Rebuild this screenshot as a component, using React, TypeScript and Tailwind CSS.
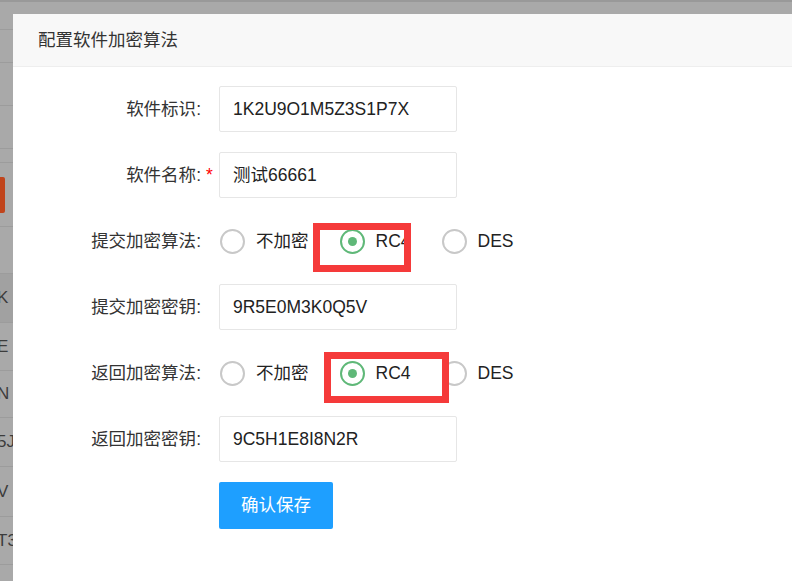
import type { ReactNode } from 'react';

const font = { fontFamily: '"Liberation Sans", "Noto Sans CJK SC", sans-serif' };

// rows of the table behind the modal shade; only a thin slice shows at the left
const bgRows: { h: number; text?: string; dark?: boolean; button?: boolean }[] = [
  { h: 30 }, { h: 33 }, { h: 43 }, { h: 43 }, { h: 14 },
  { h: 64, button: true }, { h: 47 },
  { h: 49, text: 'K', dark: true },
  { h: 48, text: 'E' }, { h: 47, text: 'N' }, { h: 49, text: '5J' },
  { h: 50, text: 'V' }, { h: 48, text: 'T3' }, { h: 30 },
];

function Radio({ label, checked }: { label: string; checked?: boolean }) {
  return (
    <div className="flex items-center mr-[31px]">
      <span className={`w-[25px] h-[25px] rounded-full border-2 flex items-center justify-center ${checked ? 'border-[#5fb878]' : 'border-[#c8c8c8]'}`}>
        {checked && <span className="w-[9px] h-[9px] rounded-full bg-[#5fb878]" />}
      </span>
      <span className="ml-[11px] text-[#222]">{label}</span>
    </div>
  );
}

function Row({ label, required, children }: { label: string; required?: boolean; children: ReactNode }) {
  return (
    <div className="flex items-center h-[46px]">
      <div className="w-[188px] text-right text-[#333] relative">
        {label}:
        {required && <span className="absolute left-full ml-[5px] top-0 text-[#f00]">*</span>}
      </div>
      <div className="ml-[18px] flex items-center h-full relative">{children}</div>
    </div>
  );
}

function Field({ value }: { value: string }) {
  return (
    <div className="w-[238px] h-[46px] border border-[#e6e6e6] rounded-[2px] bg-white flex items-center pl-[13px] text-[#222]">
      {value}
    </div>
  );
}

function AlgoChoice({ mark }: { mark: string }) {
  return (
    <div className="flex items-center h-full pl-[1px]">
      <Radio label="不加密" />
      <Radio label="RC4" checked />
      <Radio label="DES" />
      <div className={`absolute border-[7px] border-[#f53a3a] ${mark}`} />
    </div>
  );
}

export default function App() {
  return (
    <div className="w-[792px] h-[581px] overflow-hidden bg-[#a9a9a9] flex flex-col text-[17.5px]" style={font}>
      <div className="h-[14px] shrink-0 border-t-2 border-[#999]" />
      <div className="flex flex-1 min-h-0">
        <div className="w-[13px] shrink-0 flex flex-col -mt-[14px]">
          {bgRows.map((r, i) => (
            <div
              key={i}
              style={{ height: r.h }}
              className={`shrink-0 border-b border-[#9c9c9c] flex items-center overflow-hidden ${r.dark ? 'bg-[#a1a1a1]' : ''}`}
            >
              {r.button && <div className="w-[5px] h-[36px] bg-[#c0441c] rounded-r-[2px]" />}
              {r.text && <span className="text-[#3c3c3c] text-[17px] -ml-[3px] whitespace-nowrap">{r.text}</span>}
            </div>
          ))}
        </div>
        <div className="flex-1 bg-white flex flex-col">
          <div className="h-[53px] shrink-0 bg-[#f8f8f8] border-b border-[#eee] flex items-center pl-[25px] text-[#333]">
            配置软件加密算法
          </div>
          <div className="pt-[19px] flex flex-col gap-[20px]">
            <Row label="软件标识"><Field value="1K2U9O1M5Z3S1P7X" /></Row>
            <Row label="软件名称" required><Field value="测试66661" /></Row>
            <Row label="提交加密算法"><AlgoChoice mark="left-[94px] top-[5px] w-[98px] h-[49px]" /></Row>
            <Row label="提交加密密钥"><Field value="9R5E0M3K0Q5V" /></Row>
            <Row label="返回加密算法"><AlgoChoice mark="left-[105px] top-[2px] w-[125px] h-[51px]" /></Row>
            <Row label="返回加密密钥"><Field value="9C5H1E8I8N2R" /></Row>
            <div className="flex">
              <button className="ml-[206px] w-[114px] h-[47px] bg-[#1e9fff] text-white rounded-[2px]">确认保存</button>
            </div>
          </div>
        </div>
      </div>
    </div>
  );
}
